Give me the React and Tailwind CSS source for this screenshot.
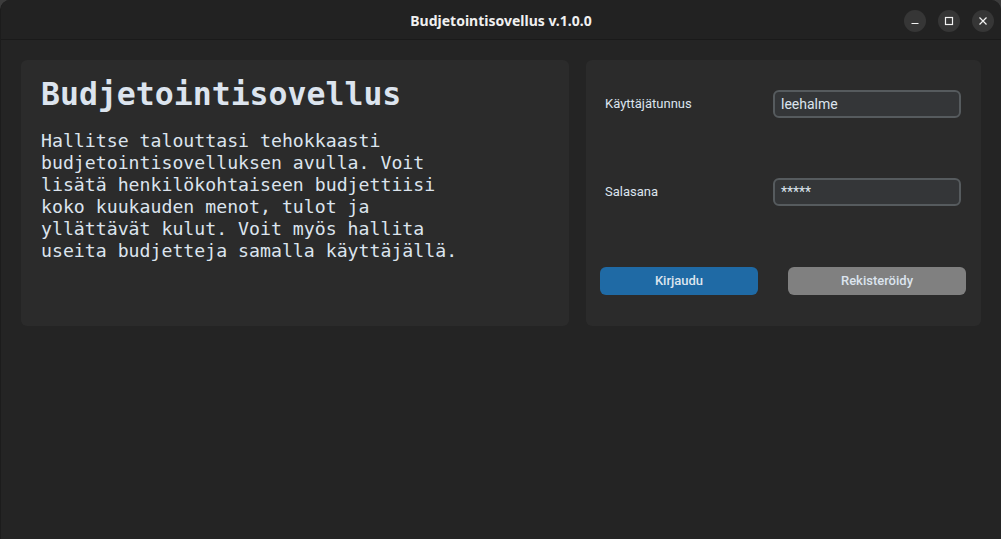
import React from 'react';

const mono = { fontFamily: '"DejaVu Sans Mono", "Liberation Mono", monospace' };
const roboto = { fontFamily: 'Roboto, "Noto Sans", sans-serif' };

function WinButton({ children }) {
  return (
    <div className="w-[22px] h-[22px] rounded-full bg-[#363636] flex items-center justify-center text-[#f2f2f2]">
      {children}
    </div>
  );
}

function Field({ label, value }) {
  return (
    <div className="flex items-center h-[28px]">
      <span className="w-[168px] text-[13px] text-[#dce4ee]" style={roboto}>{label}</span>
      <div className="w-[188px] h-[28px] rounded-[6px] border-2 border-[#565b5e] bg-[#343638] flex items-center px-[6px] text-[14px] text-[#dce4ee]" style={roboto}>
        {value}
      </div>
    </div>
  );
}

export default function App() {
  return (
    <div className="w-[1001px] h-[539px] bg-[#3c3c3c] overflow-hidden">
      <div className="w-full h-full rounded-t-[10px] bg-[#242424] flex flex-col overflow-hidden border-l border-[#1c1c1c]">
        <div className="h-[40px] shrink-0 bg-[#222222] border-b border-[#1a1a1a] relative flex items-center justify-center">
          <span className="text-[14px] font-bold text-[#f0f0f0] mt-[2px]" style={{ fontFamily: '"Noto Sans", "DejaVu Sans", sans-serif' }}>
            Budjetointisovellus v.1.0.0
          </span>
          <div className="absolute right-[7px] top-[10px] flex gap-[12px]">
            <WinButton>
              <svg width="10" height="10" viewBox="0 0 10 10"><path d="M1.5 7.5h7" stroke="currentColor" strokeWidth="1.2" /></svg>
            </WinButton>
            <WinButton>
              <svg width="10" height="10" viewBox="0 0 10 10"><rect x="1.5" y="1.5" width="7" height="7" fill="none" stroke="currentColor" strokeWidth="1.2" /></svg>
            </WinButton>
            <WinButton>
              <svg width="10" height="10" viewBox="0 0 10 10"><path d="M1.5 1.5l7 7M8.5 1.5l-7 7" stroke="currentColor" strokeWidth="1.2" /></svg>
            </WinButton>
          </div>
        </div>

        <div className="flex gap-[17px] pt-[20px] pl-[20px]">
          <div className="w-[548px] h-[266px] rounded-[6px] bg-[#2b2b2b] pt-[14px] px-[20px]">
            <h1 className="text-[31.5px] leading-[40px] font-bold text-[#dce4ee]" style={mono}>Budjetointisovellus</h1>
            <p className="mt-[16px] text-[18.2px] leading-[22px] text-[#dce4ee] whitespace-pre-line" style={mono}>
              {'Hallitse talouttasi tehokkaasti\nbudjetointisovelluksen avulla. Voit\nlisätä henkilökohtaiseen budjettiisi\nkoko kuukauden menot, tulot ja\nyllättävät kulut. Voit myös hallita\nuseita budjetteja samalla käyttäjällä.'}
            </p>
          </div>

          <div className="w-[395px] h-[266px] rounded-[6px] bg-[#2b2b2b] pt-[30px] pl-[19px] flex flex-col">
            <Field label="Käyttäjätunnus" value="leehalme" />
            <div className="mt-[60px]">
              <Field label="Salasana" value="*****" />
            </div>
            <div className="mt-[61px] flex gap-[30px] -ml-[5px]">
              <button className="w-[158px] h-[28px] rounded-[6px] bg-[#1f6aa5] text-[13px] font-medium text-[#dce4ee]" style={roboto}>Kirjaudu</button>
              <button className="w-[178px] h-[28px] rounded-[6px] bg-[#808080] text-[13px] font-medium text-[#dce4ee]" style={roboto}>Rekisteröidy</button>
            </div>
          </div>
        </div>
      </div>
    </div>
  );
}
